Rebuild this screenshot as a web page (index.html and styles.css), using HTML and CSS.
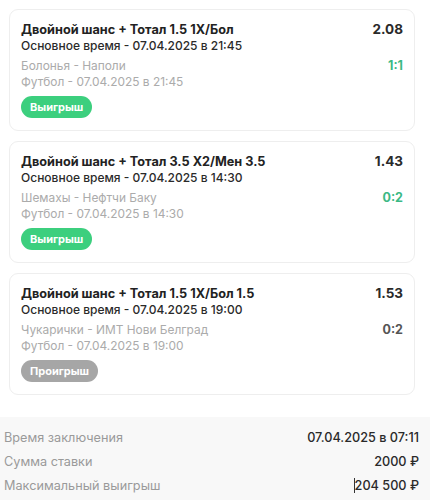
FILE: index.html
```html
<!DOCTYPE html>
<html lang="ru">
<head>
<meta charset="utf-8">
<link rel="stylesheet" href="styles.css">
</head>
<body>
<div class="list">
  <div class="card">
    <div class="row">
      <div class="title">Двойной шанс + Тотал 1.5 1X/Бол</div>
      <div class="odds">2.08</div>
    </div>
    <div class="sub">Основное время - 07.04.2025 в 21:45</div>
    <div class="row meta">
      <div class="muted">Болонья - Наполи</div>
      <div class="score win">1:1</div>
    </div>
    <div class="muted">Футбол - 07.04.2025 в 21:45</div>
    <span class="badge badge-win">Выигрыш</span>
  </div>
  <div class="card">
    <div class="row">
      <div class="title">Двойной шанс + Тотал 3.5 X2/Мен 3.5</div>
      <div class="odds">1.43</div>
    </div>
    <div class="sub">Основное время - 07.04.2025 в 14:30</div>
    <div class="row meta">
      <div class="muted">Шемахы - Нефтчи Баку</div>
      <div class="score win">0:2</div>
    </div>
    <div class="muted">Футбол - 07.04.2025 в 14:30</div>
    <span class="badge badge-win">Выигрыш</span>
  </div>
  <div class="card">
    <div class="row">
      <div class="title">Двойной шанс + Тотал 1.5 1X/Бол 1.5</div>
      <div class="odds">1.53</div>
    </div>
    <div class="sub">Основное время - 07.04.2025 в 19:00</div>
    <div class="row meta">
      <div class="muted">Чукарички - ИМТ Нови Белград</div>
      <div class="score">0:2</div>
    </div>
    <div class="muted">Футбол - 07.04.2025 в 19:00</div>
    <span class="badge badge-lose">Проигрыш</span>
  </div>
</div>
<div class="summary">
  <div class="srow"><span class="label">Время заключения</span><span class="value">07.04.2025 в 07:11</span></div>
  <div class="srow"><span class="label">Сумма ставки</span><span class="value">2000 ₽</span></div>
  <div class="srow"><span class="label">Максимальный выигрыш</span><span class="value"><span class="caret"></span>204 500 ₽</span></div>
</div>
</body>
</html>
```
FILE: styles.css
```css
* { box-sizing: border-box; }
html, body { margin: 0; padding: 0; background: #fff; }
body {
  font-family: Inter, "Noto Sans", sans-serif;
  color: #222;
  width: 430px;
  height: 500px;
  overflow: hidden;
}
.list {
  display: flex;
  flex-direction: column;
  gap: 10px;
  padding: 9px 15px 0 9px;
}
.card {
  border: 1px solid #eeeeee;
  border-radius: 9px;
  padding: 11px 11px 14px 11px;
  display: flex;
  flex-direction: column;
  align-items: flex-start;
  background: #fff;
  height: 122px;
}
.row {
  display: flex;
  justify-content: space-between;
  align-items: baseline;
  width: 100%;
}
.title {
  font-size: 12.7px;
  font-weight: 700;
  line-height: 17px;
  color: #222;
}
.odds {
  font-size: 13.5px;
  font-weight: 700;
  line-height: 17px;
  color: #2a2a2a;
}
.sub {
  font-size: 12px;
  font-weight: 500;
  line-height: 16px;
  color: #2a2a2a;
}
.meta { margin-top: 4px; }
.muted {
  font-size: 11.9px;
  line-height: 16px;
  color: #ababab;
}
.score {
  font-size: 12.5px;
  font-weight: 700;
  color: #555;
}
.score.win { color: #3bb985; }
.badge {
  margin-top: 6px;
  display: inline-block;
  height: 22px;
  line-height: 22px;
  padding: 0 9px;
  border-radius: 11px;
  font-size: 11px;
  font-weight: 700;
  color: #fff;
}
.badge-win { background: #3ccf7e; }
.badge-lose { background: #a6a6a6; }
.summary {
  margin-top: 22px;
  background: #f8f8f8;
  padding: 8px 11px 0 4px;
  display: flex;
  flex-direction: column;
  height: 100px;
}
.srow {
  display: flex;
  justify-content: space-between;
  align-items: center;
  height: 24px;
  font-size: 12.7px;
}
.label { color: #9a9a9a; }
.value { color: #2a2a2a; font-weight: 500; display: flex; align-items: center; }
.caret {
  display: inline-block;
  width: 1px;
  height: 15px;
  background: #333;
}
```
